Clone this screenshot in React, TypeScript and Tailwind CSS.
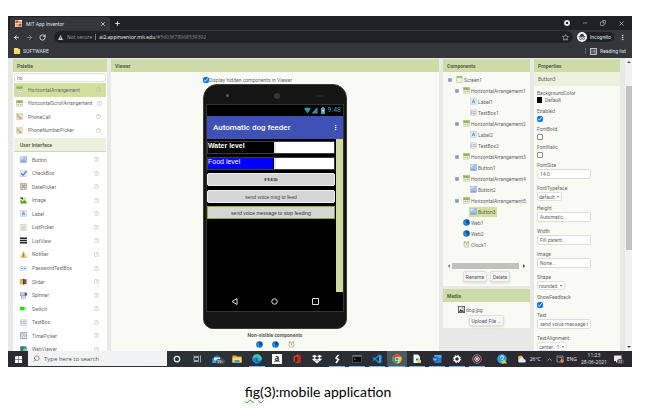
import React, { useState } from "react";
import { FaDropbox } from "react-icons/fa";
import {
  ArrowLeft,
  ArrowRight,
  ChevronUp,
  Copy,
  EllipsisVertical,
  Minus,
  Plus,
  RotateCw,
  Search,
  Star,
  X,
} from "lucide-react";

type Glyph =
  | "arrangement"
  | "phone"
  | "button"
  | "checkbox"
  | "date"
  | "image"
  | "label"
  | "listpicker"
  | "listview"
  | "notifier"
  | "password"
  | "slider"
  | "spinner"
  | "switch"
  | "textbox"
  | "time"
  | "web"
  | "clock"
  | "screen"
  | "media"
  | "viewer";

const glyphs: Record<Glyph, React.ReactNode> = {
  arrangement: (
    <>
      <rect x="1" y="1" width="14" height="14" fill="#f3f5ea" stroke="#b3bda6" />
      <rect x="1" y="1" width="14" height="6" fill="#8dbb4c" />
      <rect x="3" y="9" width="4" height="3" fill="#a8bfa0" />
      <rect x="9" y="9" width="4" height="3" fill="#a8bfa0" />
    </>
  ),
  phone: (
    <>
      <rect x="1" y="1" width="14" height="14" fill="#e8dfc6" stroke="#c9c2ae" />
      <path d="M4 3l3 3-1 2 3 3 2-1 2 3-2 1C7 13 3 9 3 5z" fill="#d8b46c" stroke="#b09c72" />
    </>
  ),
  button: (
    <>
      <rect x="1" y="1" width="14" height="14" fill="#a9c5e8" stroke="#7f9cc4" />
      <path d="M1 1h9L1 9z" fill="#d5e4f6" />
      <path d="M3 12h10" stroke="#6f95c8" strokeWidth="2" />
    </>
  ),
  checkbox: (
    <>
      <rect x="1" y="2" width="13" height="13" fill="#e3ebf5" stroke="#a3b1c4" />
      <path d="M3 8l4 4 8-10" fill="none" stroke="#3e70b9" strokeWidth="2.5" />
    </>
  ),
  date: (
    <>
      <rect x="1" y="1" width="14" height="14" fill="#e5dfd9" stroke="#8d857e" />
      <path d="M1 5h14M1 10h14M5 1v14M11 1v14" stroke="#8d857e" />
      <rect x="6" y="6" width="4" height="3" fill="#e06c3c" />
    </>
  ),
  image: (
    <>
      <rect x="1" y="1" width="14" height="14" fill="#dcefc4" />
      <path d="M1 15V6l5 4 4-3 5 4v4z" fill="#5ca823" />
      <path d="M1 1h6v5L1 4z" fill="#33611b" />
      <circle cx="11" cy="4" r="2" fill="#f0d24a" />
    </>
  ),
  label: (
    <>
      <rect x="1" y="1" width="14" height="14" fill="#dfe9f5" stroke="#b4c3d6" />
      <path d="M5 12l3-8 3 8M6 9h4" fill="none" stroke="#4a7cc0" strokeWidth="1.6" />
    </>
  ),
  listpicker: (
    <>
      <rect x="2" y="1" width="12" height="14" fill="#edf0e6" stroke="#b5b9ad" />
      <path d="M4 5h8M4 8h8M4 11h8" stroke="#b9c3a8" strokeWidth="1.5" />
    </>
  ),
  listview: <path d="M0 3h16M0 8h16M0 13h16" stroke="#222" strokeWidth="3.6" />,
  notifier: (
    <>
      <path d="M8 1l7 14H1z" fill="#f0bd5c" stroke="#c9a46a" />
      <path d="M8 6v5M8 12v2" stroke="#77603a" strokeWidth="1.6" />
    </>
  ),
  password: (
    <>
      <rect x="1" y="3" width="14" height="10" fill="#e6edf5" stroke="#bcc6d2" />
      <path d="M3 8h4M9 8h4" stroke="#5d88c0" strokeWidth="2.4" />
    </>
  ),
  slider: (
    <>
      <rect x="1" y="3" width="14" height="11" fill="#6b6250" />
      <rect x="1" y="3" width="7" height="11" fill="#f3b51f" />
      <rect x="7" y="2" width="3" height="13" fill="#3e3a34" />
    </>
  ),
  spinner: (
    <>
      <rect x="1" y="2" width="14" height="6" fill="#c6d2e4" stroke="#56627a" />
      <rect x="3" y="9" width="10" height="5" fill="#dde4ef" stroke="#7c879b" />
      <rect x="11" y="2" width="4" height="6" fill="#33415f" />
    </>
  ),
  switch: (
    <>
      <rect x="0" y="4" width="16" height="8" rx="4" fill="#cfd6cd" />
      <rect x="0" y="4" width="10" height="8" rx="2" fill="#12e412" />
    </>
  ),
  textbox: (
    <>
      <rect x="1" y="2" width="14" height="12" fill="#e9ebee" stroke="#b1b5bb" />
      <path d="M4 5v6M7 6h6M7 10h6" stroke="#8a94a2" strokeWidth="1.4" />
    </>
  ),
  time: (
    <>
      <rect x="1" y="1" width="14" height="14" fill="#e2e6ea" stroke="#6a7580" strokeDasharray="3 1" strokeWidth="1.6" />
      <circle cx="8" cy="8" r="4" fill="#fff" stroke="#6a7580" />
      <path d="M8 5v3h2" fill="none" stroke="#48525c" />
    </>
  ),
  web: (
    <>
      <circle cx="8" cy="8" r="7.6" fill="#1574c4" />
      <path d="M8 1c5 1 7 5 6 9l-4-1-3-4z" fill="#0b4d94" />
      <path d="M2 5l4 1 1 4-2 3z" fill="#2d9be8" />
    </>
  ),
  clock: (
    <>
      <circle cx="4" cy="3" r="2.4" fill="#d6a24e" />
      <circle cx="12" cy="3" r="2.4" fill="#d6a24e" />
      <circle cx="8" cy="9" r="6" fill="#f4f1ea" stroke="#b4ab9c" strokeWidth="1.4" />
      <path d="M8 5v4l3 1" fill="none" stroke="#8c7c68" strokeWidth="1.2" />
    </>
  ),
  screen: (
    <>
      <rect x="2" y="1" width="12" height="14" fill="#eef2e2" stroke="#9ba389" />
      <rect x="2" y="1" width="12" height="3" fill="#8dbb4c" />
    </>
  ),
  media: (
    <>
      <rect x="1" y="1" width="14" height="14" fill="#eee" stroke="#555" strokeWidth="2" />
      <path d="M2 13l4-6 3 3 2-2 3 5z" fill="#444" />
      <circle cx="11" cy="5" r="1.5" fill="#555" />
    </>
  ),
  viewer: (
    <>
      <rect x="1" y="1" width="14" height="14" fill="#3c8a36" />
      <path d="M1 1h9L1 9z" fill="#2a70c2" />
      <circle cx="11" cy="9" r="4" fill="#7cc0ee" />
    </>
  ),
};

function Icon({ name, className = "size-[7px]" }: { name: Glyph; className?: string }) {
  return (
    <svg viewBox="0 0 16 16" className={"shrink-0 " + className} aria-hidden="true">
      {glyphs[name]}
    </svg>
  );
}

function BrowserChrome() {
  return (
    <header className="shrink-0 bg-[#35363a] font-['Roboto','Open_Sans',sans-serif] text-[#dfe1e5]">
      <div className="flex h-[14px] items-end bg-[#202124] pl-[2px]">
        <div className="flex h-[13px] w-[100px] items-center rounded-t-[3px] bg-[#35363a] pr-1 pl-[5px]">
          <svg viewBox="0 0 16 16" className="size-[7px]" aria-hidden="true">
            <rect width="16" height="16" fill="#efe6c8" />
            <path d="M1 1h7v6H1z" fill="#d8453b" />
            <path d="M9 3h6v5H9z" fill="#8bb83c" />
            <path d="M1 9h6v6H1z" fill="#e7a938" />
            <path d="M8 9h7v6H8z" fill="#c83a6a" />
          </svg>
          <span className="ml-1 flex-1">MIT App Inventor</span>
          <button aria-label="Close tab">
            <X className="size-[6px]" strokeWidth={3} />
          </button>
        </div>
        <button aria-label="New tab" className="ml-1 self-center">
          <Plus className="size-[7px]" strokeWidth={3} />
        </button>
        <div className="mr-[7px] ml-auto flex items-center gap-3 self-center">
          <button aria-label="Tab search" className="flex size-[6px] items-center justify-center rounded-full bg-[#dfe1e5]">
            <span className="size-[2px] bg-[#202124]" />
          </button>
          <button aria-label="Minimise">
            <Minus className="size-[6px]" />
          </button>
          <button aria-label="Restore">
            <Copy className="size-[6px] -scale-x-100" />
          </button>
          <button aria-label="Close">
            <X className="size-[7px]" />
          </button>
        </div>
      </div>
      <div className="flex h-[14px] items-center pr-[6px] pl-[5px]">
        <button aria-label="Back">
          <ArrowLeft className="size-[7px]" strokeWidth={3} />
        </button>
        <button aria-label="Forward" className="ml-[6px] text-[#85878b]">
          <ArrowRight className="size-[7px]" strokeWidth={3} />
        </button>
        <button aria-label="Reload" className="ml-[6px]">
          <RotateCw className="size-[7px]" strokeWidth={3} />
        </button>
        <div className="ml-2 flex h-3 flex-1 items-center rounded-full bg-[#202124] px-1 font-['Open_Sans',sans-serif]">
          <svg viewBox="0 0 10 10" className="size-[5px]" aria-hidden="true">
            <path d="M5 0l5 10H0z" fill="#c8cacd" />
            <path d="M5 4v3" stroke="#202124" strokeWidth="1.4" />
          </svg>
          <span className="ml-1 text-[#9aa0a6]">Not secure</span>
          <span className="mx-[3px] h-[6px] w-px bg-[#7c7f84]" />
          <span className="text-[#f1f3f4]">ai2.appinventor.mit.edu</span>
          <span className="text-[#85898e]">/#5603678068539392</span>
          <button aria-label="Bookmark this page" className="ml-auto">
            <Star className="size-[7px]" />
          </button>
        </div>
        <div className="ml-1 flex h-[10px] w-[37px] items-center gap-[3px] rounded-full bg-[#202124]">
          <svg viewBox="0 0 20 20" className="size-[10px]" aria-hidden="true">
            <circle cx="10" cy="10" r="10" fill="#f1f3f4" />
            <path d="M6 8l1.500-4h5L14 8zM3.500 8.500h13v1.300h-13z" fill="#303134" />
            <circle cx="7" cy="13" r="2.200" fill="none" stroke="#303134" strokeWidth="1.200" />
            <circle cx="13" cy="13" r="2.200" fill="none" stroke="#303134" strokeWidth="1.200" />
          </svg>
          <span>Incognito</span>
        </div>
        <button aria-label="Browser menu" className="ml-[5px]">
          <EllipsisVertical className="size-[7px]" strokeWidth={3} />
        </button>
      </div>
      <div className="flex h-[14px] items-center px-[6px]">
        <svg viewBox="0 0 12 12" className="size-[6px]" aria-hidden="true">
          <path d="M0 0h8l1 2h3v10H0z" fill="#fbd968" />
        </svg>
        <a href="#software" className="ml-[3px]">
          SOFTWARE
        </a>
        <span className="mr-1 ml-auto h-[6px] w-px bg-[#5f6368]" />
        <button className="flex items-center gap-[3px]">
          <svg viewBox="0 0 14 14" className="size-[7px]" fill="none" stroke="#e8eaed" strokeWidth="1.500" aria-hidden="true">
            <rect x="1" y="1" width="12" height="12" />
            <path d="M3 4h2M3 7h2M3 10h2M7 4h4M7 7h4M7 10h4" />
          </svg>
          Reading list
        </button>
      </div>
    </header>
  );
}

function PanelTitle({ children }: { children: React.ReactNode }) {
  return (
    <h2 className="flex h-[13px] shrink-0 items-center bg-[#cddba9] px-1 font-bold text-[#5a6148]">{children}</h2>
  );
}

const matches: { icon: Glyph; name: string }[] = [
  { icon: "arrangement", name: "HorizontalArrangement" },
  { icon: "arrangement", name: "HorizontalScrollArrangement" },
  { icon: "phone", name: "PhoneCall" },
  { icon: "phone", name: "PhoneNumberPicker" },
];

const userInterface: { icon: Glyph; name: string }[] = [
  { icon: "button", name: "Button" },
  { icon: "checkbox", name: "CheckBox" },
  { icon: "date", name: "DatePicker" },
  { icon: "image", name: "Image" },
  { icon: "label", name: "Label" },
  { icon: "listpicker", name: "ListPicker" },
  { icon: "listview", name: "ListView" },
  { icon: "notifier", name: "Notifier" },
  { icon: "password", name: "PasswordTextBox" },
  { icon: "slider", name: "Slider" },
  { icon: "spinner", name: "Spinner" },
  { icon: "switch", name: "Switch" },
  { icon: "textbox", name: "TextBox" },
  { icon: "time", name: "TimePicker" },
  { icon: "viewer", name: "WebViewer" },
];

function Help({ about }: { about: string }) {
  return (
    <button aria-label={"Help for " + about} className="ml-auto">
      <svg viewBox="0 0 10 10" className="size-[5px]" fill="none" stroke="#b4b4b4" aria-hidden="true">
        <circle cx="5" cy="5" r="4.400" />
        <path d="M3.500 4c0-2 3-2 3 0 0 1-1.500 1-1.500 2M5 7v1" />
      </svg>
    </button>
  );
}

function Palette() {
  const [query, setQuery] = useState("ho");
  return (
    <section className="w-[94px] shrink-0 bg-white text-[#6c6c6c]">
      <PanelTitle>Palette</PanelTitle>
      <div className="px-px">
        <input
          aria-label="Search components"
          value={query}
          onChange={(e) => setQuery(e.target.value)}
          className="mt-px block h-[9px] w-full rounded-[2px] border border-[#e2e2e2] px-[2px]"
        />
        <ul className="mt-px flex h-[54px] flex-col">
          {matches.map((item) => (
            <li
              key={item.name}
              className="flex flex-1 items-center gap-[5px] pr-[5px] pl-[2px] first:bg-[#d2df9f]"
            >
              <Icon name={item.icon} />
              {item.name}
              <Help about={item.name} />
            </li>
          ))}
        </ul>
        <h3 className="mt-px flex h-[14px] items-center border-b border-[#cfd6bd] bg-[#ebf1dc] pl-[6px] font-bold text-[#5f6650]">
          User Interface
        </h3>
        <ul className="mt-px flex h-[203px] flex-col">
          {userInterface.map((item) => (
            <li key={item.name} className="flex flex-1 items-center gap-[5px] pr-[7px] pl-[6px]">
              <Icon name={item.icon} />
              {item.name}
              <Help about={item.name} />
            </li>
          ))}
        </ul>
      </div>
    </section>
  );
}

function LevelRow({ id, label, className }: { id: string; label: string; className: string }) {
  return (
    <div className="flex h-[13px] border border-[#3d3d3d] bg-black text-[7px] leading-[8px] text-white">
      <label htmlFor={id} className={"w-[65px] " + className}>
        {label}
      </label>
      <input id={id} className="ml-px w-0 flex-1 border-l-2 border-[#e4e4e4] bg-white" />
    </div>
  );
}

function Phone() {
  return (
    <div className="w-[144px] rounded-t-[14px] rounded-b-[10px] border border-[#3b3b3d] bg-[#151515] px-[2px] pb-4">
      <div className="flex h-[19px] items-center px-5 pt-[2px]">
        <span className="size-[3px] rounded-full bg-[#55565c]" />
        <span className="ml-[45px] size-[6px] rounded-full bg-[#38383b]" />
        <span className="ml-auto h-[2px] w-2 rounded-full bg-[#222224]" />
      </div>
      <div className="flex h-[208px] flex-col border border-[#33342c] bg-black">
        <div className="flex h-[11px] shrink-0 items-center justify-end gap-[3px] pr-[2px] font-['Roboto',sans-serif] text-[7px] leading-none text-[#38a4bd]">
          <svg viewBox="0 0 28 14" className="h-[7px] w-[14px]" fill="#2e93ab" aria-hidden="true">
            <path d="M0 3c4-3 10-3 14 0L7 13z" />
            <path d="M27 0v13H15z" />
          </svg>
          <svg viewBox="0 0 8 14" className="h-[7px] w-1" fill="#38a4bd" aria-hidden="true">
            <path d="M0 2h2V0h4v2h2v12H0z" />
            <path d="M4.500 4L2 8h2v3l2.500-4h-2z" fill="#fff" />
          </svg>
          9:48
        </div>
        <div className="flex h-[23px] shrink-0 items-center justify-between bg-[#3f51b5] pr-1 pl-[6px] font-['Roboto',sans-serif] text-[8px] leading-none font-medium text-white">
          Automatic dog feeder
          <button aria-label="App menu">
            <EllipsisVertical className="size-[7px]" strokeWidth={3} />
          </button>
        </div>
        <div className="flex min-h-0 flex-1">
          <div className="flex flex-1 flex-col gap-[3px] py-[2px] font-['Liberation_Sans',sans-serif]">
            <LevelRow id="water" label="Water level" className="font-bold" />
            <LevelRow id="food" label="Food level" className="bg-[#0000ff]" />
            <button className="h-[13px] rounded-[2px] border border-[#efefef] bg-[#d6d6d6] font-['Liberation_Serif',serif] font-bold text-[#222]">
              FEED
            </button>
            <button className="mt-px h-[13px] rounded-[2px] border border-[#efefef] bg-[#d6d6d6] text-[#444]">
              send voice msg to feed
            </button>
            <button className="h-[13px] border border-[#8fab2c] bg-[#d6d6d6] text-[#333]">
              send voice message to stop feeding
            </button>
          </div>
          <div className="ml-px w-[7px] bg-[#cddba0]" />
        </div>
        <div className="flex h-[19px] shrink-0 items-center justify-around px-[7px]">
          <button aria-label="Back">
            <svg viewBox="0 0 14 14" className="size-[7px]" fill="none" stroke="#ddd" strokeWidth="2" aria-hidden="true">
              <path d="M12 1v12L2 7z" />
            </svg>
          </button>
          <button aria-label="Home">
            <svg viewBox="0 0 14 14" className="size-[7px]" fill="none" stroke="#ddd" strokeWidth="2" aria-hidden="true">
              <circle cx="7" cy="7" r="5.500" />
            </svg>
          </button>
          <button aria-label="Recent apps">
            <svg viewBox="0 0 14 14" className="size-[7px]" fill="none" stroke="#ddd" strokeWidth="2" aria-hidden="true">
              <path d="M1 1h12v12H1z" />
            </svg>
          </button>
        </div>
      </div>
    </div>
  );
}

function Viewer() {
  return (
    <section className="flex flex-1 flex-col bg-[#f9faf4]">
      <PanelTitle>Viewer</PanelTitle>
      <div className="flex flex-col items-center">
        <div className="mt-[5px] w-[144px]">
          <label className="flex h-[6px] items-center whitespace-nowrap text-[#6c6c6c]">
            <input type="checkbox" defaultChecked className="m-0 size-[6px]" />
            Display hidden components in Viewer
          </label>
        </div>
        <div className="mt-px">
          <Phone />
        </div>
        <p className="mt-[3px] font-bold text-[#5c5c5c]">Non-visible components</p>
        <div className="mt-[3px] flex gap-[9px]">
          <Icon name="web" />
          <Icon name="web" />
          <Icon name="clock" />
        </div>
      </div>
    </section>
  );
}

type TreeNode = { level: 0 | 1 | 2; icon: Glyph; name: string; open?: boolean; selected?: boolean };

const tree: TreeNode[] = [
  { level: 0, icon: "screen", name: "Screen1", open: true },
  { level: 1, icon: "arrangement", name: "HorizontalArrangement1", open: true },
  { level: 2, icon: "label", name: "Label1" },
  { level: 2, icon: "textbox", name: "TextBox1" },
  { level: 1, icon: "arrangement", name: "HorizontalArrangement2", open: true },
  { level: 2, icon: "label", name: "Label2" },
  { level: 2, icon: "textbox", name: "TextBox2" },
  { level: 1, icon: "arrangement", name: "HorizontalArrangement3", open: true },
  { level: 2, icon: "button", name: "Button1" },
  { level: 1, icon: "arrangement", name: "HorizontalArrangement4", open: true },
  { level: 2, icon: "button", name: "Button2" },
  { level: 1, icon: "arrangement", name: "HorizontalArrangement5", open: true },
  { level: 2, icon: "button", name: "Button3", selected: true },
  { level: 1, icon: "web", name: "Web1" },
  { level: 1, icon: "web", name: "Web2" },
  { level: 1, icon: "clock", name: "Clock1" },
];

const indent = { 0: "pl-0", 1: "pl-[7px]", 2: "pl-[14px]" };

function SmallButton({ children }: { children: React.ReactNode }) {
  return (
    <button className="h-[11px] rounded-[2px] border border-[#e0e0e0] bg-[#f5f5f5] px-[2px] text-[#555] shadow-sm">
      {children}
    </button>
  );
}

function Components() {
  return (
    <div className="flex w-[87px] shrink-0 flex-col gap-[3px] text-[#666]">
      <section className="bg-[#f9faf4] pb-1">
        <PanelTitle>Components</PanelTitle>
        <ul className="flex h-[178px] flex-col pt-[3px] pl-[5px]">
          {tree.map((node) => (
            <li key={node.name} className={"flex flex-1 items-center " + indent[node.level]}>
              <span className="flex w-2 shrink-0">
                {node.open && (
                  <button aria-label={"Collapse " + node.name}>
                    <svg viewBox="0 0 8 8" className="size-1" aria-hidden="true">
                      <rect width="8" height="8" rx="2" fill="#a3a9d6" />
                      <path d="M2 4h4" stroke="#6e76b4" strokeWidth="1.500" />
                    </svg>
                  </button>
                )}
              </span>
              <span
                className={
                  node.selected
                    ? "-ml-px flex h-[10px] items-center gap-px bg-[#d2df9f] px-px"
                    : "flex h-[10px] items-center gap-px"
                }
              >
                <Icon name={node.icon} className="mb-px size-[7px]" />
                {node.name}
              </span>
            </li>
          ))}
        </ul>
        <div className="mx-[5px] mt-[13px] flex h-[6px] items-center gap-[2px]">
          <span className="border-y-2 border-r-2 border-y-transparent border-r-[#777]" />
          <span className="h-[6px] flex-1 bg-[#c1c1c1]" />
          <span className="ml-[2px] border-y-2 border-l-2 border-y-transparent border-l-[#444]" />
        </div>
        <div className="mt-[2px] flex justify-center gap-[3px]">
          <SmallButton>Rename</SmallButton>
          <SmallButton>Delete</SmallButton>
        </div>
      </section>
      <section className="bg-[#f9faf4] pb-[2px]">
        <PanelTitle>Media</PanelTitle>
        <div className="mt-1 flex items-center gap-px pl-[15px]">
          <Icon name="media" />
          <a href="#dog">dog.jpg</a>
        </div>
        <div className="mt-[2px] flex justify-center">
          <SmallButton>Upload File ...</SmallButton>
        </div>
      </section>
    </div>
  );
}

type Field = { kind: "check"; name: string; on: boolean } | { kind: "text" | "select"; name: string; value: string };

const fields: Field[] = [
  { kind: "check", name: "Enabled", on: true },
  { kind: "check", name: "FontBold", on: false },
  { kind: "check", name: "FontItalic", on: false },
  { kind: "text", name: "FontSize", value: "14.0" },
  { kind: "select", name: "FontTypeface", value: "default" },
  { kind: "text", name: "Height", value: "Automatic..." },
  { kind: "text", name: "Width", value: "Fill parent..." },
  { kind: "text", name: "Image", value: "None..." },
  { kind: "select", name: "Shape", value: "rounded" },
  { kind: "check", name: "ShowFeedback", on: true },
  { kind: "text", name: "Text", value: "send voice message to stop feeding" },
  { kind: "select", name: "TextAlignment", value: "center : 1" },
];

const fieldHeight = { check: "h-[18px]", text: "h-[23px]", select: "h-[20px]" };

function Property({ field }: { field: Field }) {
  return (
    <div className={"shrink-0 " + fieldHeight[field.kind]}>
      <label htmlFor={field.name} className="block">
        {field.name}
      </label>
      {field.kind === "check" && (
        <input
          id={field.name}
          type="checkbox"
          defaultChecked={field.on}
          className="m-0 mt-[2px] block size-[6px] not-checked:appearance-none not-checked:rounded-[1px] not-checked:border not-checked:border-[#8a8a8a] not-checked:bg-white"
        />
      )}
      {field.kind === "text" && (
        <input
          id={field.name}
          defaultValue={field.value}
          className="mt-px block h-[10px] w-[54px] rounded-[2px] border border-[#dcdcdc] bg-white px-[2px]"
        />
      )}
      {field.kind === "select" && (
        <span className="mt-px flex h-[9px] w-fit items-center rounded-[2px] border border-[#e0e0e0] bg-white pr-[2px] pl-px">
          <select id={field.name} defaultValue={field.value} className="appearance-none">
            <option>{field.value}</option>
          </select>
          <span className="ml-[2px] border-x-[1px] border-t-2 border-x-transparent border-t-[#666]" />
        </span>
      )}
    </div>
  );
}

function Properties() {
  return (
    <section className="flex w-[86px] shrink-0 flex-col bg-[#f9faf4] text-[#666]">
      <PanelTitle>Properties</PanelTitle>
      <p className="flex h-[14px] shrink-0 items-center bg-[#ebf1dc] px-1">Button3</p>
      <div className="flex flex-col pt-1 pl-[3px]">
        <div className="h-[18px] shrink-0">
          <p>BackgroundColor</p>
          <button className="mt-px flex items-center gap-[3px]">
            <span className="h-[6px] w-[5px] bg-black" />
            Default
          </button>
        </div>
        {fields.map((field) => (
          <Property key={field.name} field={field} />
        ))}
      </div>
    </section>
  );
}

function Scrollbar() {
  return (
    <div className="-mt-px ml-[5px] flex w-[7px] shrink-0 flex-col items-center bg-[#f1f1f1] py-[3px]">
      <span className="border-x-2 border-b-2 border-x-transparent border-b-[#555]" />
      <span className="mt-[23px] h-[164px] w-[6px] bg-[#c1c1c1]" />
      <span className="mt-auto border-x-2 border-t-2 border-x-transparent border-t-[#444]" />
    </div>
  );
}

type TaskbarApp = { name: string; running?: boolean; active?: boolean; art: React.ReactNode };

const s = "size-[10px]";

const apps: TaskbarApp[] = [
  {
    name: "Cortana",
    art: (
      <svg viewBox="0 0 20 20" className={s}>
        <circle cx="10" cy="10" r="5.500" fill="none" stroke="#e8e8e8" strokeWidth="2.500" />
      </svg>
    ),
  },
  {
    name: "Task view",
    art: (
      <svg viewBox="0 0 20 20" className={s} fill="none" stroke="#b8bfc2" strokeWidth="1.600">
        <path d="M4 7h9v6H4zM4 3v2h9V3M4 17v-2h9v2M17 3v14" />
      </svg>
    ),
  },
  {
    name: "Mail",
    art: (
      <span className="relative">
        <svg viewBox="0 0 20 20" className={s}>
          <path d="M1 8l9-6 9 6v10H1z" fill="#1379cc" />
          <path d="M4 7h12v6l-6 3-6-3z" fill="#d9ecfb" />
          <path d="M1 9l9 6 9-6v9H1z" fill="#35a6ee" />
        </svg>
        <span className="absolute top-[5px] left-1 rounded-full bg-[#4a5054] px-px text-[4px] leading-[5px] text-white">
          99+
        </span>
      </span>
    ),
  },
  {
    name: "File Explorer",
    art: (
      <svg viewBox="0 0 20 20" className={s}>
        <path d="M1 3h7l2 2h9v12H1z" fill="#e9a82b" />
        <path d="M1 7h18v10H1z" fill="#fcd870" />
        <path d="M5 12h10v5H5z" fill="#3f9be0" />
      </svg>
    ),
  },
  {
    name: "Edge",
    running: true,
    art: (
      <svg viewBox="0 0 20 20" className={s}>
        <circle cx="10" cy="10" r="9.500" fill="#1b83d6" />
        <path d="M1 9C2 3 7 0 11 .5c6 .5 9 5 8.500 9-.5 3-4 4-7 3 2-3 0-6-3.500-6S2 8 1 11z" fill="#45c7a2" />
        <path d="M9 9c-1 3 1 6 5 6l3 0c-4 2-9 0-9-4z" fill="#0c3f7c" />
      </svg>
    ),
  },
  {
    name: "Amazon",
    art: (
      <span className="flex size-[10px] flex-col items-center justify-center bg-white font-['Open_Sans',sans-serif] text-[8px] leading-[6px] font-bold text-[#222]">
        a
        <span className="h-px w-[6px] bg-[#8f8f8f]" />
      </span>
    ),
  },
  {
    name: "Office",
    art: (
      <svg viewBox="0 0 20 20" className={s}>
        <path d="M3 5l9-4 5 2v14l-5 2-9-4 8 1V5L6 6.500v7L3 15z" fill="#e8441a" />
        <path d="M12 1l5 2v14l-5 2z" fill="#c42b10" />
      </svg>
    ),
  },
  { name: "Dropbox", art: <FaDropbox className="size-[10px] text-white" /> },
  {
    name: "Editor",
    running: true,
    art: (
      <svg viewBox="0 0 20 20" className={s}>
        <path d="M13 2L8 8l5 3-5 7" fill="none" stroke="#fff" strokeWidth="3" />
      </svg>
    ),
  },
  {
    name: "Command Prompt",
    running: true,
    art: (
      <svg viewBox="0 0 20 20" className={s}>
        <path d="M1 3h18v14H1z" fill="#0b0b0b" stroke="#70757a" />
        <path d="M1 3h18v2H1z" fill="#9da1a4" />
        <path d="M4 8l3 2-3 2" fill="none" stroke="#999" />
      </svg>
    ),
  },
  {
    name: "Visual Studio Code",
    running: true,
    art: (
      <svg viewBox="0 0 20 20" className={s}>
        <path d="M14 1l5 2v14l-5 2z" fill="#2fa4ee" />
        <path d="M15 2L2 13M15 18L2 7" stroke="#1b8fdd" strokeWidth="2.800" />
      </svg>
    ),
  },
  {
    name: "Chrome",
    running: true,
    active: true,
    art: (
      <svg viewBox="0 0 20 20" className={s}>
        <circle cx="10" cy="10" r="9.500" fill="#f6c62c" />
        <path d="M10 .5A9.500 9.500 0 0 0 2 5l4 7 4-6.500h8.500A9.500 9.500 0 0 0 10 .5z" fill="#df4434" />
        <path d="M2 5a9.500 9.500 0 0 0 7 14.400L13 13 7 13z" fill="#2ba24c" />
        <circle cx="10" cy="10" r="4.500" fill="#fff" />
        <circle cx="10" cy="10" r="3.500" fill="#4285f4" />
      </svg>
    ),
  },
  {
    name: "Python",
    running: true,
    art: (
      <svg viewBox="0 0 20 20" className={s}>
        <path d="M3 1h9l4 4v13H3z" fill="#f5f5f5" />
        <path d="M8 9h5v4H8z" fill="#3b77a8" />
        <path d="M11 12h7v6h-7z" fill="#f2cd3f" />
      </svg>
    ),
  },
  {
    name: "Word",
    running: true,
    art: (
      <svg viewBox="0 0 20 20" className={s}>
        <path d="M5 2h14v16H5z" fill="#2a7bd4" />
        <path d="M5 2h14v5H5z" fill="#4aa5f0" />
        <path d="M1 6h10v9H1z" fill="#174fa4" />
        <path d="M3 8l1.500 5L6 9l1.500 4L9 8" fill="none" stroke="#fff" />
      </svg>
    ),
  },
  {
    name: "Settings",
    running: true,
    art: (
      <svg viewBox="0 0 20 20" className={s} fill="none" stroke="#fff">
        <circle cx="10" cy="10" r="5" strokeWidth="3" />
        <circle cx="10" cy="10" r="7.300" strokeWidth="2" strokeDasharray="2.900 2.830" />
      </svg>
    ),
  },
  {
    name: "Groove",
    running: true,
    art: (
      <svg viewBox="0 0 20 20" className={s} fill="none">
        <circle cx="10" cy="10" r="8.500" stroke="#c4706c" strokeWidth="2" />
        <circle cx="10" cy="10" r="4.500" stroke="#f3e9ee" strokeWidth="2" />
        <circle cx="10" cy="10" r="2" fill="#fff" />
      </svg>
    ),
  },
];

function Taskbar() {
  return (
    <footer className="flex h-4 shrink-0 bg-linear-to-r from-[#29363a] to-[#2b2730] font-['Open_Sans',sans-serif] text-[#e6e6e6]">
      <button aria-label="Start" className="flex w-5 shrink-0 items-center justify-center bg-[#2c2a33]">
        <svg viewBox="0 0 14 14" className="size-[7px]" fill="#fff" aria-hidden="true">
          <path d="M0 1l6-1v6.500H0zM7 0l7-1v7.500H7zM0 7.500h6V14H0zM7 7.500h7V15H7z" />
        </svg>
      </button>
      <label className="flex h-[15px] w-[139px] shrink-0 items-center gap-1 bg-[#f2f2f2] pl-[5px] text-[#555]">
        <Search className="size-[7px] -scale-x-100" />
        <input
          aria-label="Search"
          placeholder="Type here to search"
          className="w-0 flex-1 bg-transparent text-[6px] leading-[8px] placeholder:text-[#555]"
        />
      </label>
      <nav className="flex" aria-label="Pinned apps">
        {apps.map((app) => (
          <button
            key={app.name}
            aria-label={app.name}
            className={app.active ? "flex w-5 flex-col items-center bg-[#4b5960]" : "flex w-5 flex-col items-center"}
          >
            <span className="flex h-[15px] items-center">{app.art}</span>
            {app.running && <span className="h-px w-4 bg-[#76b9ed]" />}
          </button>
        ))}
      </nav>
      <div className="ml-auto flex items-center pr-[9px]">
        <svg viewBox="0 0 20 20" className="size-[10px]" aria-hidden="true">
          <circle cx="10" cy="10" r="9.500" fill="#2aa3dc" />
          <path d="M7 7c0-4 6-4 6 0 0 2-3 2-3 5M10 14v2" fill="none" stroke="#fff" strokeWidth="2" />
          <path d="M14 10l6 9H9z" fill="#f5c431" />
        </svg>
        <svg viewBox="0 0 20 20" className="ml-[10px] size-[10px]" aria-hidden="true">
          <circle cx="7" cy="8" r="5" fill="#f7b731" />
          <path d="M4 17a4 4 0 0 1 1-7 5 5 0 0 1 9 0 4 4 0 0 1 2 7z" fill="#d7ebfa" />
        </svg>
        <span className="ml-[3px]">26°C</span>
        <ChevronUp className="ml-[5px] size-[7px]" />
        <svg viewBox="0 0 16 16" className="ml-[3px] size-[8px]" fill="none" stroke="#ddd" aria-hidden="true">
          <path d="M2 2h12v12H2zM5 5h6v6" />
          <circle cx="12" cy="12" r="3.500" fill="#f0882a" stroke="none" />
        </svg>
        <span className="ml-[3px]">ENG</span>
        <time className="ml-1 text-center leading-[7px]">
          11:23
          <br />
          28-06-2021
        </time>
        <button aria-label="21 notifications" className="relative ml-[7px]">
          <svg viewBox="0 0 18 18" className="size-[9px]" fill="#e8e8e8" aria-hidden="true">
            <path d="M0 1h15v11H8l-4 4v-4H0z" />
          </svg>
          <span className="absolute top-[4px] left-[3px] rounded-full bg-[#4b4850] px-px text-[4px] leading-[5px] text-white">
            21
          </span>
        </button>
      </div>
    </footer>
  );
}

export default function App() {
  return (
    <main className="flex h-screen min-h-[409px] flex-col bg-white pt-4">
      <figure className="flex min-h-0 flex-1 flex-col">
        <div className="mr-[35px] ml-2 flex min-h-0 flex-1 flex-col overflow-hidden text-[5px] leading-[6px]">
          <BrowserChrome />
          <div className="flex min-h-0 flex-1 overflow-hidden bg-[#e8e8e6] pt-px pl-[5px] font-['Roboto',sans-serif]">
            <Palette />
            <div className="ml-1 flex min-w-0 flex-1 gap-1">
              <Viewer />
              <Components />
              <Properties />
            </div>
            <Scrollbar />
          </div>
          <Taskbar />
        </div>
        <figcaption className="flex h-[42px] shrink-0 items-center justify-center pt-2 pr-[31px] font-['Lato','Open_Sans',sans-serif] text-[14px] leading-4 text-black">
          <span className="underline decoration-[#3c9a3c] decoration-wavy decoration-1 underline-offset-2">fig(</span>
          3):mobile application
        </figcaption>
      </figure>
    </main>
  );
}
